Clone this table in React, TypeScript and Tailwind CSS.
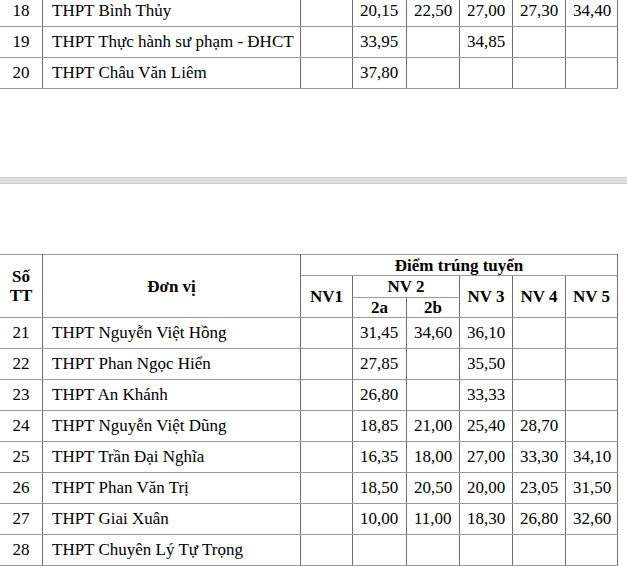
import React from "react";

type Row = { tt: number; ten: string; nv1?: string; a?: string; b?: string; nv3?: string; nv4?: string; nv5?: string };

const bangTren: Row[] = [
  { tt: 18, ten: "THPT Bình Thủy", a: "20,15", b: "22,50", nv3: "27,00", nv4: "27,30", nv5: "34,40" },
  { tt: 19, ten: "THPT Thực hành sư phạm - ĐHCT", a: "33,95", nv3: "34,85" },
  { tt: 20, ten: "THPT Châu Văn Liêm", a: "37,80" },
];

const bangDuoi: Row[] = [
  { tt: 21, ten: "THPT Nguyễn Việt Hồng", a: "31,45", b: "34,60", nv3: "36,10" },
  { tt: 22, ten: "THPT Phan Ngọc Hiển", a: "27,85", nv3: "35,50" },
  { tt: 23, ten: "THPT An Khánh", a: "26,80", nv3: "33,33" },
  { tt: 24, ten: "THPT Nguyễn Việt Dũng", a: "18,85", b: "21,00", nv3: "25,40", nv4: "28,70" },
  { tt: 25, ten: "THPT Trần Đại Nghĩa", a: "16,35", b: "18,00", nv3: "27,00", nv4: "33,30", nv5: "34,10" },
  { tt: 26, ten: "THPT Phan Văn Trị", a: "18,50", b: "20,50", nv3: "20,00", nv4: "23,05", nv5: "31,50" },
  { tt: 27, ten: "THPT Giai Xuân", a: "10,00", b: "11,00", nv3: "18,30", nv4: "26,80", nv5: "32,60" },
  { tt: 28, ten: "THPT Chuyên Lý Tự Trọng" },
];

const font = "font-['Liberation_Serif',serif] text-[17px] text-black";
const cell = `${font} font-normal border border-y-[#9a9a9a] border-x-[#6f6f6f] p-0 align-middle leading-[20px]`;
const hd = `${font} border border-y-[#9a9a9a] border-x-[#6f6f6f] p-0 align-middle text-center font-bold leading-[19px]`;

function Cols() {
  return (
    <colgroup>
      <col className="w-[43px]" />
      <col className="w-[258px]" />
      <col className="w-[52px]" />
      <col className="w-[54px]" />
      <col className="w-[53px]" />
      <col className="w-[53px]" />
      <col className="w-[53px]" />
      <col className="w-[52px]" />
    </colgroup>
  );
}

function Dong({ r }: { r: Row }) {
  const so = (v?: string) => <td className={`${cell} pl-[7px]`}>{v}</td>;
  return (
    <tr className="h-[31px]">
      <td className={`${cell} text-center`}>{r.tt}</td>
      <td className={`${cell} pl-[9px]`}>{r.ten}</td>
      {so(r.nv1)}
      {so(r.a)}
      {so(r.b)}
      {so(r.nv3)}
      {so(r.nv4)}
      {so(r.nv5)}
    </tr>
  );
}

export default function App() {
  return (
    <div className={`w-[627px] h-[566px] overflow-hidden bg-white ${font}`}>
      <table className={`-ml-px -mt-[5px] w-[618px] table-fixed border-collapse ${font}`}>
        <Cols />
        <tbody>
          {bangTren.map((r) => (
            <Dong key={r.tt} r={r} />
          ))}
        </tbody>
      </table>

      <div className="h-[88px]" />
      <div className="h-[7px] border-y border-[#cdcdcd] bg-[#dfdfe1]" />
      <div className="h-[70px]" />

      <table className={`-ml-px w-[618px] table-fixed border-collapse ${font}`}>
        <Cols />
        <thead>
          <tr className="h-[21px]">
            <th rowSpan={3} className={hd}>Số<br />TT</th>
            <th rowSpan={3} className={hd}>Đơn vị</th>
            <th colSpan={6} className={hd}>Điểm trúng tuyển</th>
          </tr>
          <tr className="h-[22px]">
            <th rowSpan={2} className={hd}>NV1</th>
            <th colSpan={2} className={hd}>NV 2</th>
            <th rowSpan={2} className={hd}>NV 3</th>
            <th rowSpan={2} className={hd}>NV 4</th>
            <th rowSpan={2} className={hd}>NV 5</th>
          </tr>
          <tr className="h-[20px]">
            <th className={hd}>2a</th>
            <th className={hd}>2b</th>
          </tr>
        </thead>
        <tbody>
          {bangDuoi.map((r) => (
            <Dong key={r.tt} r={r} />
          ))}
          <tr className="h-[31px]">
            {Array.from({ length: 8 }).map((_, i) => (
              <td key={i} className={cell} />
            ))}
          </tr>
        </tbody>
      </table>
    </div>
  );
}
